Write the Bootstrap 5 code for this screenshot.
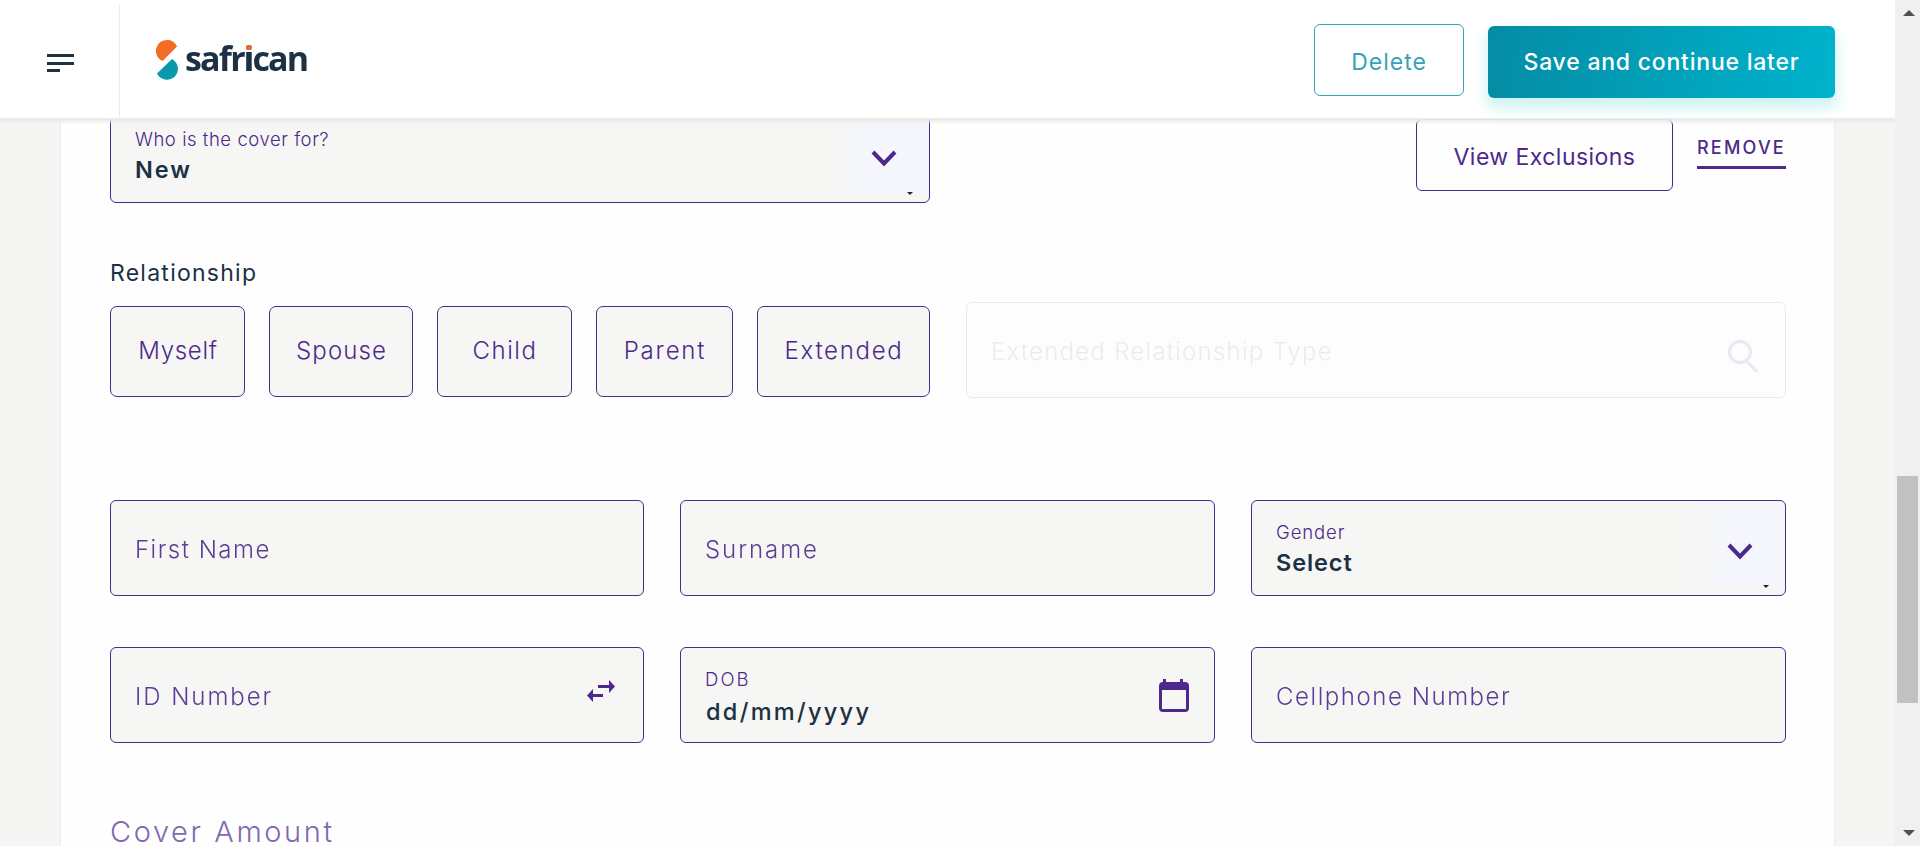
<!DOCTYPE html>
<html lang="en">
<head>
<meta charset="utf-8">
<title>Safrican</title>
<link rel="stylesheet" href="https://cdn.jsdelivr.net/npm/bootstrap@5.3.0/dist/css/bootstrap.min.css">
<style>
:root{--violet:#4b2a8c;--ink:#1c3144;--soft:#f6f6f4;--line:#ecece8}
body{font-family:Inter,"Open Sans",sans-serif;background:#f5f5f3;color:var(--ink);height:846px}
.topbar{height:119px;border-bottom:1px solid var(--line);box-shadow:0 2px 3px 1px #ebebe8;z-index:5}
.menu-cell{width:120px;height:113px;border-right:1px solid var(--line);padding:8px 0 0 47px}
.brand-logo{margin:39px 0 0 35px}
.brand-name{font:700 34px/50px "Open Sans",sans-serif;letter-spacing:-1.8px;margin:33px 0 0 5px;height:50px;color:transparent;background:linear-gradient(var(--ink),var(--ink));-webkit-background-clip:text;background-clip:text}
.brand-name span{background:linear-gradient(#f36c25 16.500px,var(--ink) 16.500px);-webkit-background-clip:text;background-clip:text}
.actions{padding:24px 60px 0 0;gap:24px}
.btn{--bs-btn-border-radius:6px;height:72px;font-size:23px;line-height:1;padding:0}
.btn-del{width:150px;color:#35a3b6;border:1px solid #35a3b6;letter-spacing:1px;padding-top:4px}
.btn-del:hover{color:#35a3b6}
.btn-save{width:347px;margin-top:2px;color:#fff;font-weight:500;letter-spacing:.78px;border:0;background:linear-gradient(100deg,#048ca4,#00b3cd);box-shadow:0 8px 14px 2px #cdf3f3}
.btn-view{width:257px;color:var(--violet);border:1px solid var(--violet);letter-spacing:.45px;padding-top:4px}
.remove-link{font-size:18px;font-weight:500;letter-spacing:2.2px;color:var(--violet);text-decoration:none;border-bottom:3px solid var(--violet);height:37px;line-height:31px;width:89px;margin:13px 0 0 24px;white-space:nowrap}
.sheet{width:1775px;margin-left:60px;background:#fefefe;border:solid var(--line);border-width:0 1px;padding:0 48px 0 49px;height:727px;display:flow-root}
.top-row{margin-top:-12px}
.box{height:96px;border:1px solid var(--violet);border-radius:6px;background-color:var(--soft);position:relative;padding-left:24px;white-space:nowrap}
.box.who{width:820px}
.box.ext{width:821px;opacity:.1;background:#f5f5f5;margin-top:-4px}
.box.pick{background:linear-gradient(90deg,transparent,#f4f6fb 32px) no-repeat right top/96px 86px var(--soft)}
.ph{font-size:24px;font-weight:300;color:var(--violet);line-height:98px;display:block;opacity:.9}
.cap-label{font-size:18.5px;font-weight:300;color:var(--violet);line-height:22px;display:block;padding-top:20px}
.val{font-size:23.5px;font-weight:600;line-height:28px;display:block;margin-top:6px}
.date-val{font-weight:500;margin:8px 0 0 1px}
.chev{position:absolute;right:32px;top:42px}
.tick{position:absolute;right:16px;bottom:7px}
.ico{position:absolute}
.rel-title{font-size:23px;line-height:28px;letter-spacing:1.25px;margin:56px 0 0}
.rel-row{margin-top:19px}
.pill{height:91px;border:1px solid var(--violet);border-radius:7px;background:var(--soft);font-size:24px;font-weight:300;color:var(--violet);display:flex;align-items:center;justify-content:center;padding:0 0 2px 1px}
.pills{gap:24px;margin-right:36px}
.w1{width:135px;letter-spacing:.7px}.w2{width:144px;letter-spacing:1.1px}.w3{width:135px;letter-spacing:1.5px}.w4{width:137px;letter-spacing:1.8px}.w5{width:173px;letter-spacing:1.7px}
.trio{display:grid;grid-template-columns:534px 535px 535px;column-gap:36px;row-gap:51px;margin-top:102px}
.s5{letter-spacing:.55px}.s9{letter-spacing:.9px}.s12{letter-spacing:.9px}.s13{letter-spacing:1.25px}.s15{letter-spacing:1.5px}.s16{letter-spacing:1.55px}.s20{letter-spacing:1.95px}.s21{letter-spacing:2.1px}.s23{letter-spacing:2.3px}
.cover-title{font-size:29px;font-weight:300;letter-spacing:2.6px;color:#7f69b0;line-height:36px;margin:71px 0 0}
.scroller{width:25px;height:846px;background:#f0f0f0;z-index:10;padding:10px 0}
.thumb{width:21px;height:227px;background:#c1c1c1;margin-top:460px;margin-left:2px}
</style>
<script src="https://cdn.jsdelivr.net/npm/bootstrap@5.3.0/dist/js/bootstrap.bundle.min.js"></script>
</head>
<body class="overflow-hidden d-flex">
<div class="flex-grow-1">
<header class="topbar bg-white d-flex position-relative">
  <div class="menu-cell mt-1 d-flex align-items-start">
    <svg width="28" height="80" fill="#1c3144"><path d="M0 42h27v3H0zM0 50h27v3H0zM0 57h13v3H0z"/></svg>
  </div>
  <svg class="brand-logo" width="25" height="46">
    <path d="M7.500 22A11 11 0 1 1 22 7.500z" fill="#f36c25"/>
    <path d="M17 20A11 11 0 1 1 2 34.500z" fill="#0b98aa"/>
  </svg>
  <div class="brand-name">safr<span>i</span>can</div>
  <div class="actions ms-auto d-flex">
    <button class="btn btn-del">Delete</button>
    <button class="btn btn-save">Save and continue later</button>
  </div>
</header>
<main class="sheet">
  <div class="top-row d-flex">
    <div class="box who pick">
      <span class="cap-label s5">Who is the cover for?</span><span class="val s20">New</span>
      <svg class="chev" width="26" height="18"><path d="M2 2l11 11.500L24 2" fill="none" stroke="#4b2a8c" stroke-width="4"/></svg>
      <svg class="tick" width="6" height="3"><path d="M0 0h6L3 3z" fill="#222"/></svg>
    </div>
    <div class="d-flex ms-auto pt-2 mt-1">
      <button class="btn btn-view">View Exclusions</button>
      <a class="remove-link" href="#">REMOVE</a>
    </div>
  </div>
  <h2 class="rel-title fw-normal">Relationship</h2>
  <div class="d-flex rel-row">
    <div class="pills d-flex">
      <div class="pill w1">Myself</div><div class="pill w2">Spouse</div><div class="pill w3">Child</div><div class="pill w4">Parent</div><div class="pill w5">Extended</div>
    </div>
    <div class="box ext">
      <span class="ph s13">Extended Relationship Type</span>
      <svg class="ico end-0 top-0" width="60" height="75" fill="none" stroke="#4b2a8c" stroke-width="3"><circle cx="15" cy="49" r="10.500"/><path d="M22 58.500l10 10"/></svg>
    </div>
  </div>
  <div class="trio">
    <div class="box"><span class="ph s15">First Name</span></div>
    <div class="box"><span class="ph s20">Surname</span></div>
    <div class="box pick">
      <span class="cap-label s9">Gender</span><span class="val s12">Select</span>
      <svg class="chev" width="26" height="18"><path d="M2 2l11 11.500L24 2" fill="none" stroke="#4b2a8c" stroke-width="4"/></svg>
      <svg class="tick" width="6" height="3"><path d="M0 0h6L3 3z" fill="#222"/></svg>
    </div>
    <div class="box"><span class="ph s20">ID Number</span>
      <svg class="ico end-0 top-0 me-4" width="33" height="60" fill="#4b2a8c"><path d="M12 37h11v-5l6 6.500-6 6.500v-5H12zM17 46H7v-5l-6 6.500L7 54v-5h10z"/></svg>
    </div>
    <div class="box"><span class="cap-label s21">DOB</span><span class="val date-val s23">dd/mm/yyyy</span>
      <svg class="ico end-0 top-0 me-4" width="31" height="70" fill="#4b2a8c"><path fill-rule="evenodd" d="M4 31h3v3h14v-3h3v3h2q4 0 4 4v22q0 4-4 4H4q-4 0-4-4V38q0-4 4-4zM3 42v19h24V42z"/></svg>
    </div>
    <div class="box"><span class="ph s16">Cellphone Number</span></div>
  </div>
  <h2 class="cover-title">Cover Amount</h2>
</main>
</div>
<aside class="scroller d-flex flex-column flex-shrink-0">
  <svg class="ms-2 flex-shrink-0" width="12" height="6"><path d="M0 6L6 0l6 6z" fill="#505050"/></svg>
  <div class="thumb flex-shrink-0"></div>
  <svg class="ms-2 mt-auto flex-shrink-0" width="12" height="6"><path d="M0 0h12L6 6z" fill="#505050"/></svg>
</aside>
</body>
</html>
